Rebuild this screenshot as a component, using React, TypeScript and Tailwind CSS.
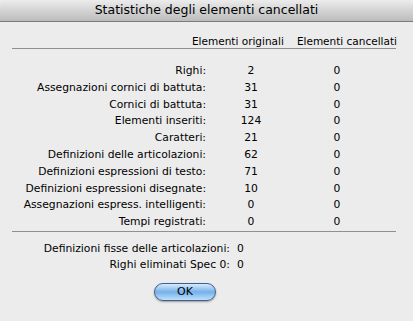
import React from 'react';

const rows: [string, string, string][] = [
  ['Righi:', '2', '0'],
  ['Assegnazioni cornici di battuta:', '31', '0'],
  ['Cornici di battuta:', '31', '0'],
  ['Elementi inseriti:', '124', '0'],
  ['Caratteri:', '21', '0'],
  ['Definizioni delle articolazioni:', '62', '0'],
  ['Definizioni espressioni di testo:', '71', '0'],
  ['Definizioni espressioni disegnate:', '10', '0'],
  ['Assegnazioni espress. intelligenti:', '0', '0'],
  ['Tempi registrati:', '0', '0'],
];

const extra: [string, string][] = [
  ['Definizioni fisse delle articolazioni:', '0'],
  ['Righi eliminati Spec 0:', '0'],
];

export default function App() {
  return (
    <div className="w-[413px] h-[321px] bg-[#ececec] text-black font-['DejaVu_Sans',sans-serif] text-[10.75px] overflow-hidden">
      {/* title bar */}
      <div className="h-[22px] rounded-t-[5px] bg-gradient-to-b from-[#ececec] to-[#bcbcbc] border-b border-[#7b7b7b] flex items-center justify-center">
        <span className="text-[12.5px] leading-none pb-[1px]">Statistiche degli elementi cancellati</span>
      </div>

      {/* column headers */}
      <div className="flex justify-end gap-[13px] pr-[16px] pt-[13px] leading-[13px] text-[10.5px]">
        <span>Elementi originali</span>
        <span>Elementi cancellati</span>
      </div>
      <div className="ml-[12px] mr-[17px] h-px bg-[#909090]" />

      {/* table */}
      <div className="pt-[14px]">
        {rows.map(([label, orig, del], i) => (
          <div key={i} className="flex h-[16.8px] items-center leading-none">
            <div className="w-[206px] text-right">{label}</div>
            <div className="w-[90px] text-center">{orig}</div>
            <div className="w-[82px] text-center">{del}</div>
          </div>
        ))}
      </div>
      <div className="ml-[12px] mr-[17px] h-px bg-[#909090]" />

      <div className="pt-[9px]">
        {extra.map(([label, val], i) => (
          <div key={i} className="flex h-[16.5px] items-center leading-none">
            <div className="w-[230px] text-right">{label}</div>
            <div className="pl-[7px]">{val}</div>
          </div>
        ))}
      </div>

      <div className="pl-[154px] pt-[9px]">
        <button className="w-[62px] h-[18px] rounded-full border border-[#3f5f8c] bg-gradient-to-b from-[#d6ebfc] via-[#74b0ea] to-[#bfe0fa] shadow-[0_1px_2px_rgba(0,0,0,0.35)] text-[11px] leading-none flex items-center justify-center">
          OK
        </button>
      </div>
    </div>
  );
}
